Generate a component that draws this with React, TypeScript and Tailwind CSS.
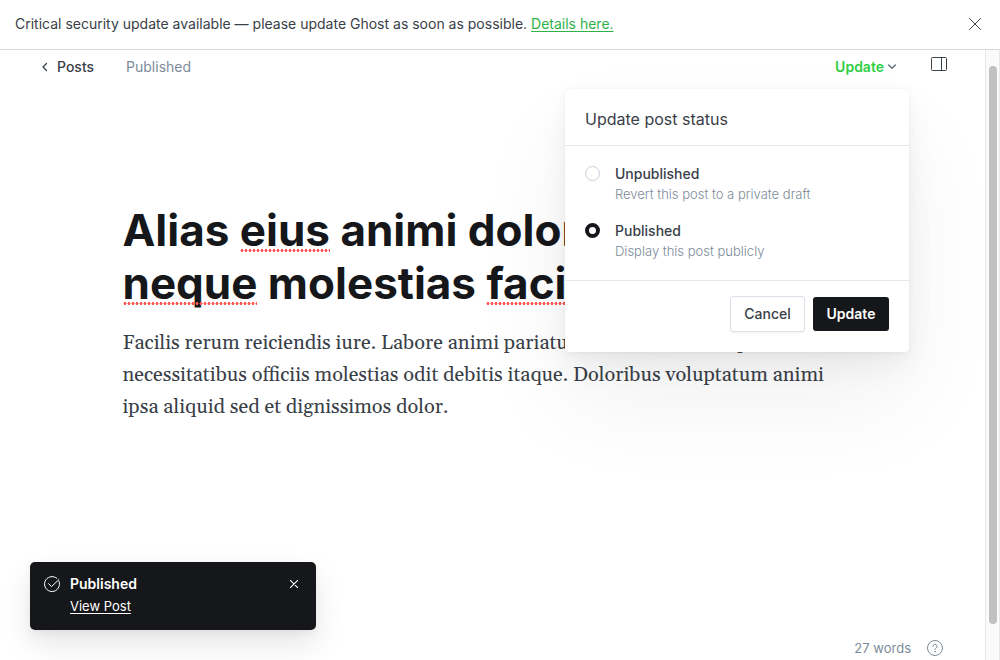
import type { ReactNode } from "react";

function CloseIcon({ className }: { className: string }) {
  return (
    <svg className={className} viewBox="0 0 12 12" fill="none" stroke="currentColor" strokeLinecap="round" aria-hidden="true">
      <path d="M0.5 0.5 11.5 11.5M11.5 0.5 0.5 11.5" />
    </svg>
  );
}

function Misspelled({ children }: { children: ReactNode }) {
  return (
    <span className="relative after:absolute after:inset-x-0 after:bottom-[5px] after:h-[3px] after:bg-[radial-gradient(circle_at_center,#ff5a55_1.2px,transparent_1.8px)] after:bg-[length:4px_3px] after:bg-repeat-x after:content-['']">
      {children}
    </span>
  );
}

function Banner() {
  return (
    <div className="flex h-[50px] shrink-0 items-center justify-between border-b border-[#d6d9dc] pr-[18px] pb-0.5 pl-[15px]">
      <p className="text-sm text-[#394047]">
        Critical security update available — please update Ghost as soon as possible.{" "}
        <a href="#details" className="text-[#30b24a] underline underline-offset-2">
          Details here.
        </a>
      </p>
      <button type="button" aria-label="Dismiss alert" className="p-px text-[#394047]">
        <CloseIcon className="size-3" />
      </button>
    </div>
  );
}

function StatusOption({ id, title, hint, checked }: { id: string; title: string; hint: string; checked?: boolean }) {
  return (
    <div className="flex gap-[15px]">
      <input
        type="radio"
        name="post-status"
        id={id}
        defaultChecked={checked}
        className="mt-0.5 size-[15px] shrink-0 appearance-none rounded-full border border-[#c8d0d9] bg-white checked:border-4 checked:border-[#15171a]"
      />
      <label htmlFor={id} className="text-[#394047]">
        <span className="block text-sm font-medium">{title}</span>
        <span className="block text-[13px] leading-5 font-light text-[#7c8b9a]">{hint}</span>
      </label>
    </div>
  );
}

function StatusMenu() {
  return (
    <div className="absolute top-[39px] right-[76px] z-10 w-[344px] rounded bg-white shadow-[0_0_1px_rgba(0,0,0,0.12),0_3px_8px_rgba(0,0,0,0.04),0_14px_30px_rgba(0,0,0,0.05),0_50px_100px_rgba(0,0,0,0.06)]">
      <h2 className="border-b border-[#e5e9ed] px-5 pt-[18px] pb-3.5 text-base text-[#394047]">Update post status</h2>
      <div className="flex flex-col gap-[17px] px-5 pt-[18px] pb-[19px]">
        <StatusOption id="unpublished" title="Unpublished" hint="Revert this post to a private draft" />
        <StatusOption id="published" title="Published" hint="Display this post publicly" checked />
      </div>
      <div className="flex items-center justify-end gap-2 border-t border-[#e5e9ed] px-5 pt-[15px] pb-5">
        <button type="button" className="h-9 w-[75px] rounded-[3px] border border-[#dae1e8] bg-white text-sm font-medium text-[#394047] shadow-xs">
          Cancel
        </button>
        <button type="button" className="h-[34px] w-[76px] rounded-[3px] bg-[#15171a] text-sm font-semibold text-white">
          Update
        </button>
      </div>
    </div>
  );
}

function EditorHeader() {
  return (
    <header className="relative flex h-[34px] items-center pr-[38px] pl-[41px] text-sm">
      <a href="#posts" className="flex items-center gap-2 text-[#394047]">
        <svg className="h-2.5 w-2" viewBox="0 0 8 10" fill="none" stroke="currentColor" strokeWidth="1.3" strokeLinecap="round" strokeLinejoin="round" aria-hidden="true">
          <path d="M5.5 1.5 2 5l3.500 3.500" />
        </svg>
        <span className="font-medium">Posts</span>
      </a>
      <span className="ml-8 text-[#7c8b9a]">Published</span>
      <button type="button" aria-expanded="true" className="ml-auto flex items-center gap-1 font-semibold text-[#30cf43]">
        Update
        <svg className="h-1.5 w-2" viewBox="0 0 8 6" fill="none" stroke="#626d79" strokeWidth="1.4" strokeLinecap="round" strokeLinejoin="round" aria-hidden="true">
          <path d="M0.7 1 4 4.300 7.300 1" />
        </svg>
      </button>
      <button type="button" aria-label="Settings" className="ml-[35px] pb-1.5 text-[#394047]">
        <svg className="h-3.5 w-4" viewBox="0 0 16 14" fill="none" stroke="currentColor" aria-hidden="true">
          <rect x="0.5" y="0.5" width="15" height="13" rx="1" />
          <path d="M10.500 0.500v13" />
        </svg>
      </button>
      <StatusMenu />
    </header>
  );
}

function Toast() {
  return (
    <div role="status" className="absolute bottom-[30px] left-[30px] flex h-[68px] w-[286px] items-start rounded-[5px] bg-[#15171a] px-3.5 pt-3 text-white shadow-[0_3px_8px_rgba(0,0,0,0.05),0_14px_30px_rgba(0,0,0,0.1)]">
      <svg className="mt-0.5 size-4" viewBox="0 0 16 16" fill="none" stroke="currentColor" strokeLinecap="round" strokeLinejoin="round" aria-hidden="true">
        <path d="M15 5.200A7.500 7.500 0 1 1 12.900 2.300" />
        <path d="m4.600 7.700 2.900 2.900L14.900 3.600" />
      </svg>
      <div className="ml-2.5 flex flex-col gap-0.5">
        <span className="text-sm font-semibold">Published</span>
        <a href="#view" className="text-[13px] leading-5 underline underline-offset-2">
          View Post
        </a>
      </div>
      <button type="button" aria-label="Close notification" className="mt-1.5 mr-1 ml-auto">
        <CloseIcon className="size-2 stroke-[1.6]" />
      </button>
    </div>
  );
}

export default function App() {
  return (
    <div className="flex h-screen flex-col overflow-hidden bg-white font-['Inter',sans-serif]">
      <Banner />
      <div className="flex min-h-0 flex-1">
        <div className="flex min-w-0 flex-1 flex-col">
          <EditorHeader />
          <main className="mx-auto w-full max-w-[740px] flex-1 pt-[120px]">
            <h1 className="text-[44px] leading-[53px] font-bold text-[#15171a]">
              Alias <Misspelled>eius</Misspelled> animi dolor
              <br />
              <Misspelled>neque</Misspelled> molestias <Misspelled>facilis</Misspelled>
            </h1>
            <p className="mt-[17px] font-['Georgia','Gelasio','Liberation_Serif',serif] text-xl leading-8 text-[#394047]">
              Facilis rerum reiciendis iure. Labore animi pariatur dolorem et consequatur
              <br />
              necessitatibus officiis molestias odit debitis itaque. Doloribus voluptatum animi
              <br />
              ipsa aliquid sed et dignissimos dolor.
            </p>
          </main>
          <footer className="flex items-center justify-end gap-4 pr-[42px] pb-0.5 text-[13px] leading-5 text-[#7c8b9a]">
            <span>27 words</span>
            <button type="button" aria-label="Help">
              <svg className="size-4" viewBox="0 0 16 16" fill="none" stroke="currentColor" strokeLinecap="round" strokeLinejoin="round" aria-hidden="true">
                <circle cx="8" cy="8" r="7.500" />
                <path d="M6 6.200a2 2 0 1 1 2.800 1.900c-.5.250-.8.600-.8 1.200v.400" />
                <circle cx="8" cy="11.700" r=".3" fill="currentColor" />
              </svg>
            </button>
          </footer>
        </div>
        <div className="w-[15px] shrink-0 border-x border-[#e7e7e7] bg-[#fafafa] px-0.5 pt-4 pb-9" aria-hidden="true">
          <div className="mx-auto h-full w-2 rounded-full bg-[#c1c1c1]" />
        </div>
      </div>
      <Toast />
    </div>
  );
}
